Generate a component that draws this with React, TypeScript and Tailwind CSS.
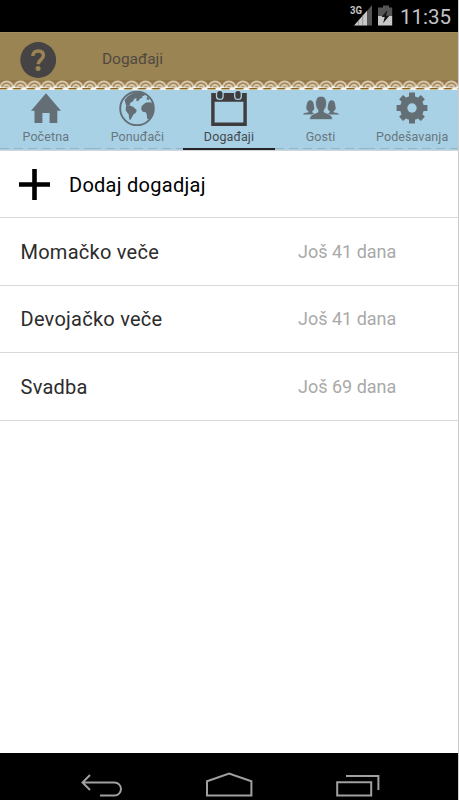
import type { ReactNode } from "react"

const HomeIcon = () => (
  <svg width="36" height="36" viewBox="0 0 36 36" fill="#636e75">
    <path d="M18 3.2 33 20.8h-3.7V33h-7.7V23h-7.2v10H6.5V20.8H3z" />
  </svg>
)

const GlobeIcon = () => (
  <svg width="36" height="36" viewBox="0 0 36 36" fill="#636e75">
    <circle cx="18" cy="18.5" r="16.8" fill="none" stroke="#636e75" strokeWidth="1.9" />
    <path d="M5.5 10 9 6l5-2.8 7-1.2 5 1.6-.6 2.2-2.4.2.6 1.8-2.4.8-2.2 2.6-1.8-.4.4-2.6-2 .4-1.8 3-2.4 1.2-.8 2.8-2-.6-1.4.8z" />
    <path d="m7.5 15 3.2.4 3.4 1.4 3.6 3.2-.6 2.6-2.6 1.8-3 5.4-1.2-.4-.6-5-3-4 .2-3.6z" />
    <path d="m25.2 13.8 2-1.4 4-.2 2.6 1.4 1 5-1 5-3.6 6-2-.8-.4-4-1-2.6-3-.4-1.6-2.2.4-3.4zM28 6.6l2.2 2-.6 1.6-2-1z" />
  </svg>
)

const CalendarIcon = () => (
  <svg width="36" height="36" viewBox="0 0 36 36">
    <path d="M.2 3h35.6v33H.2zM3.6 11.8v20.6h28.8V11.8z" fill="#3e3c3c" fillRule="evenodd" />
    <g fill="#3e3c3c" stroke="#a8d1e6" strokeWidth="1.3">
      <rect x="5.5" y=".4" width="6.6" height="9" rx="3.2" />
      <rect x="23.7" y=".4" width="6.6" height="9" rx="3.2" />
    </g>
  </svg>
)

const GuestsIcon = () => (
  <svg width="36" height="36" viewBox="0 -3 36 36" fill="#636e75">
    <path d="M3.3 14.5c.5-1 .1-7.2 4-7.2s3.5 6.2 4 7.2c.3 1.6-.8 3-2 3.800v1.300l4.200 2H0c0-1.600 3-1.800 5.400-2.400v-.9c-1.300-.8-2.300-2.200-2.100-3.800z" />
    <path d="M32.700 14.500c-.5-1-.1-7.200-4-7.200s-3.500 6.200-4 7.200c-.3 1.600.8 3 2 3.800v1.300l-4.200 2H36c0-1.600-3-1.800-5.400-2.400v-.9c1.300-.8 2.300-2.200 2.100-3.800z" />
    <path
      d="M12.700 11.400c-.5-5 1.600-8.200 5.300-8.200s5.900 3.200 5.400 8.200c-.2 3-1.400 4.400-2.300 5.600v2c3 1.900 8.200 2 8.400 7.600H6.600c.2-5.600 5.400-5.700 8.400-7.600v-2c-.9-1.200-2.100-2.600-2.300-5.600z"
      stroke="#a8d1e6"
      strokeWidth=".7"
    />
  </svg>
)

const GearIcon = () => (
  <svg width="36" height="36" viewBox="0 0 36 36">
    <g fill="#636e75">
      <rect x="15" y="2.6" width="6" height="30.8" rx=".5" />
      <rect x="15" y="2.6" width="6" height="30.8" rx=".5" transform="rotate(45 18 18)" />
      <rect x="15" y="2.6" width="6" height="30.8" rx=".5" transform="rotate(90 18 18)" />
      <rect x="15" y="2.6" width="6" height="30.8" rx=".5" transform="rotate(135 18 18)" />
      <circle cx="18" cy="18" r="12" />
    </g>
    <circle cx="18" cy="18" r="4.7" fill="#a8d1e6" />
  </svg>
)

const Lace = () => (
  <svg className="block w-full" height="10" aria-hidden="true">
    <defs>
      <pattern id="lace" x="-.4" width="13.9" height="10" patternUnits="userSpaceOnUse">
        <rect width="13.9" height="10" fill="#94784a" />
        <circle cx="7" cy="7.6" r="6.2" fill="#a48657" stroke="#d9cbb2" strokeWidth="1.8" />
        <circle cx="7" cy="8.2" r="3.2" fill="#a98d60" stroke="#d9cbb2" strokeWidth="1.8" />
        <path d="M0 5.5 3 8H0zM13.9 5.5 11 8h2.9z" fill="#f5f3ed" />
        <rect y="7.4" width="13.9" height="2.6" fill="#f5f3ed" />
        <rect y="8" width="7.5" height="1.4" fill="#8a661c" />
        <rect x="13.3" y="8" width=".6" height="1.4" fill="#8a661c" />
      </pattern>
    </defs>
    <rect width="100%" height="10" fill="url(#lace)" />
  </svg>
)

const tabs: { label: string; icon: ReactNode; active?: boolean }[] = [
  { label: "Početna", icon: <HomeIcon /> },
  { label: "Ponuđači", icon: <GlobeIcon /> },
  { label: "Događaji", icon: <CalendarIcon />, active: true },
  { label: "Gosti", icon: <GuestsIcon /> },
  { label: "Podešavanja", icon: <GearIcon /> },
]

const events = [
  { name: "Momačko veče", days: 41 },
  { name: "Devojačko veče", days: 41 },
  { name: "Svadba", days: 69 },
]

const StatusBar = () => (
  <div className="flex h-8 shrink-0 items-start justify-end bg-black pr-[7px]">
    <svg className="mr-[5px]" width="45" height="30" viewBox="0 0 45 30">
      <text x="0" y="14" fontSize="10.5" fontWeight="700" fontFamily="Roboto, sans-serif" fill="#c4c4c4" textLength="12" lengthAdjust="spacingAndGlyphs">3G</text>
      <path d="M22 5v20.5h-5V11z" fill="#555" />
      <path d="M17 10.8v14.7H4z" fill="#c8c8c8" />
      <path d="M8.5 20v6M12.7 15v11" stroke="#777" strokeWidth=".6" />
      <path d="M33 5.5h6v2h3.2v8.5H28V7.5h5z" fill="#555" />
      <path d="M28 16h14.2v9.5H28z" fill="#c8c8c8" />
      <path d="m37.5 10-6 7h3.2l-1.6 6.2 6.2-7.5h-3.2z" fill="#171717" />
    </svg>
    <span className="mt-[5px] text-[20.5px] leading-6 text-[#c4c4c4]">11:35</span>
  </div>
)

const Header = () => (
  <header className="shrink-0 border-t border-[#a38b61] bg-[#9a8453]">
    <div className="flex h-[47px] items-center pt-[6px] pl-5">
      <svg width="36" height="36" viewBox="0 0 36 36">
        <circle cx="18.2" cy="18" r="17.9" fill="#454343" />
        <path d="M12.9 14c0-3.3 2-5.1 5.3-5.1s5.2 1.9 5.2 4.6c0 4.2-5.1 4.1-5.1 8.8" fill="none" stroke="#9a8453" strokeWidth="3.5" />
        <circle cx="18.1" cy="26.5" r="2.5" fill="#9a8453" />
      </svg>
      <h1 className="ml-[46px] text-[15.5px] tracking-[-0.05px] text-[#4f4a41]">Događaji</h1>
    </div>
    <Lace />
  </header>
)

const TabBar = () => (
  <nav className="flex h-[61px] shrink-0 border-b border-[#d3d6d8] bg-[#a8d1e6]">
    {tabs.map(({ label, icon, active }) => (
      <div key={label} className="flex min-w-0 flex-1 flex-col items-center">
        {icon}
        <span className={`mt-[3px] text-[12.5px] leading-4 tracking-[0.1px] whitespace-nowrap ${active ? "text-[#454b4e]" : "text-[#68767d]"}`}>
          {label}
        </span>
        <div className={active ? "mt-[3px] h-[2px] w-full bg-[#252326]" : "mt-[3px] h-px w-full bg-[repeating-linear-gradient(90deg,#94b5c4_0_9px,#a8d1e6_9px_14px)]"} />
      </div>
    ))}
  </nav>
)

const App = () => {
  return (
    <div className="flex h-[800px] w-[459px] flex-col overflow-hidden border-r border-[#cccccc] bg-white font-['Roboto',sans-serif]">
      <StatusBar />
      <Header />
      <TabBar />

      <main className="flex-1">
        <div className="flex h-[67.4px] items-center border-b border-[#dadada] pl-[19px]">
          <svg width="31" height="31" viewBox="0 0 31 31">
            <path d="M15.5 0v31M0 15.5h31" stroke="#000" strokeWidth="4.6" />
          </svg>
          <span className="ml-[19px] pt-px text-xl tracking-[0.27px] text-black">Dodaj dogadjaj</span>
        </div>
        {events.map(({ name, days }) => (
          <div key={name} className="flex h-[67.4px] items-center border-b border-[#dadada] pl-[20.5px]">
            <span className="w-[277.5px] pt-px text-xl tracking-[0.25px] text-[#2c2c2c]">{name}</span>
            <span className="pt-px text-lg text-[#a9a9a9]">Još {days} dana</span>
          </div>
        ))}
      </main>

      <footer className="flex h-[47px] shrink-0 bg-black">
        <svg width="458" height="47" fill="none" stroke="#a0a0a0" strokeWidth="2">
          <path d="m90 22-7.5 7.5L90 37M83 29.5h31.5a6.5 6.5 0 0 1 0 13H100" />
          <path d="M207 42.6V28.2l22.1-7.7 22.3 7.7v14.4z" />
          <path d="M337.2 29.2h34v13.4h-34zM346 23.1h32.4V37" />
        </svg>
      </footer>
    </div>
  )
}

export default App
